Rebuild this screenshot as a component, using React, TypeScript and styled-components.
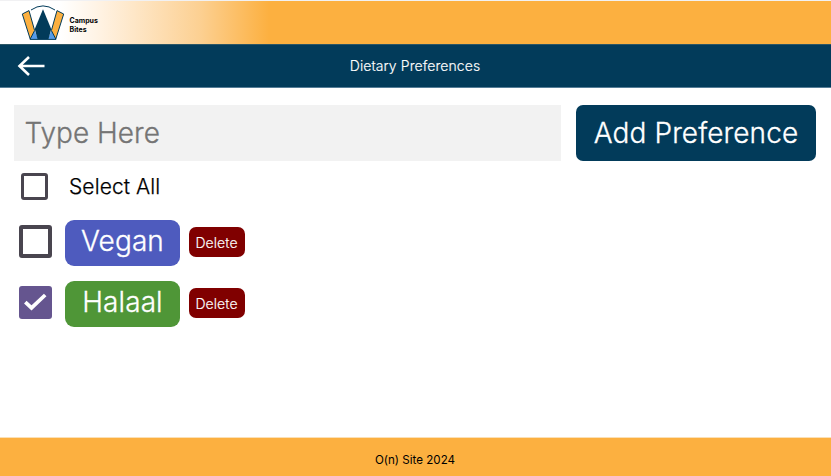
import React, { useState } from "react";
import styled, { createGlobalStyle, css } from "styled-components";

const GlobalStyle = createGlobalStyle`
  * { box-sizing: border-box; }
  body { margin: 0; background: #fff; font-family: Inter, "Liberation Sans", sans-serif; }
`;

const largeText = css`
  font-family: inherit;
  font-size: 28px;
  font-weight: 300;
  letter-spacing: 0.1px;
  -webkit-text-stroke: 0.3px currentColor;
`;

const smallText = css`
  font-family: inherit;
  font-size: 14px;
  font-weight: 300;
  letter-spacing: 0.08px;
  -webkit-text-stroke: 0.15px currentColor;
`;

const Page = styled.div`
  display: flex;
  flex-direction: column;
  width: 831px;
  height: 476px;
  overflow: hidden;
  background: #fff;
`;

const BrandBar = styled.header`
  display: flex;
  flex: none;
  height: 44px;
  padding-left: 21px;
  border-top: 1px solid #f1f1f3;
  background: linear-gradient(90deg, #fff 60px, #fff2e2 101px, #fcd092 200px, #fcb040 269px);
`;

const Logo = styled.svg`
  flex: none;
  width: 44px;
  height: 40px;
  margin-top: 3px;
`;

const BrandName = styled.div`
  margin: 15px 0 0 4.5px;
  font-size: 7px;
  font-weight: 700;
  line-height: 9px;
`;

const TitleBar = styled.div`
  display: grid;
  grid-template-columns: 60px 1fr 60px;
  align-items: center;
  flex: none;
  height: 44px;
  border-top: 1px solid #2d5766;
  border-bottom: 1px solid #557d97;
  background: #023b5a;
`;

const BackButton = styled.button`
  display: flex;
  width: 28px;
  height: 22px;
  margin-left: 17px;
  padding: 0;
  border: 0;
  background: none;
`;

const Title = styled.h1`
  ${smallText}
  margin: 0 1px 0 0;
  color: #fff;
  line-height: 20px;
  text-align: center;
`;

const Content = styled.main`
  flex: 1;
  padding: 17px 15px 0 14px;
`;

const AddRow = styled.form`
  display: flex;
  gap: 15px;
  height: 56px;
`;

const PreferenceInput = styled.input`
  ${largeText}
  width: 547px;
  height: 56px;
  padding: 0 0 0 10.5px;
  border: 0;
  border-radius: 0;
  outline: 0;
  background: #f2f2f2;
  letter-spacing: 0;
  &::placeholder { color: #757575; opacity: 1; }
`;

const AddButton = styled.button`
  ${largeText}
  width: 240px;
  height: 56px;
  padding: 0;
  border: 0;
  border-radius: 7px;
  background: #023b5a;
  color: #fff;
  white-space: nowrap;
`;

const SelectAllRow = styled.label`
  display: flex;
  align-items: center;
  height: 27px;
  margin: 12px 0 0 7px;
`;

const SelectAllText = styled.span`
  margin-left: 21px;
  font-size: 21px;
  font-weight: 300;
  letter-spacing: 0.1px;
  line-height: 27px;
  -webkit-text-stroke: 0.25px currentColor;
`;

const Check = styled.button<{ $size: number; $line: number; $checked?: boolean }>`
  display: flex;
  align-items: center;
  justify-content: center;
  flex: none;
  width: ${(p) => p.$size}px;
  height: ${(p) => p.$size}px;
  padding: 0;
  border: ${(p) => (p.$checked ? 0 : p.$line)}px solid #49454f;
  border-radius: 3px;
  background: ${(p) => (p.$checked ? "#65558f" : "#fff")};
`;

const PreferenceList = styled.div`
  display: flex;
  flex-direction: column;
  gap: 15px;
  margin: 19.5px 0 0 4.5px;
`;

const PreferenceRow = styled.div`
  display: flex;
  align-items: center;
  height: 46px;
  & > :first-child { margin-bottom: 2px; }
`;

const Tag = styled.div<{ $color: string }>`
  ${largeText}
  width: 115px;
  height: 46px;
  margin-left: 13.5px;
  border-radius: 9px;
  background: ${(p) => p.$color};
  color: #fff;
  line-height: 43px;
  text-align: center;
`;

const DeleteButton = styled.button`
  ${smallText}
  width: 56px;
  height: 30px;
  margin: 0 0 0.5px 9px;
  padding: 1px 1px 0 0;
  border: 0;
  border-radius: 7px;
  background: #800000;
  color: #fff;
`;

const Footer = styled.footer`
  flex: none;
  height: 39px;
  padding: 13px 1px 0 0;
  border-top: 1px solid #fbe0b6;
  background: #fcb040;
  font-size: 11.6px;
  font-weight: 400;
  line-height: 18px;
  text-align: center;
`;

const TICK = (
  <svg width="33" height="33" viewBox="0 0 33 33" fill="none">
    <path d="M6.3 16.2 12.5 21.9 26.2 9" stroke="#fff" strokeWidth="3.7" />
  </svg>
);

const initial = [
  { name: "Vegan", color: "#4e5bbe", checked: false },
  { name: "Halaal", color: "#4f9637", checked: true },
];

export default function App() {
  const [items, setItems] = useState(initial);
  const toggle = (name: string) =>
    setItems(items.map((i) => (i.name === name ? { ...i, checked: !i.checked } : i)));

  return (
    <>
      <GlobalStyle />
      <Page>
        <BrandBar>
          <Logo viewBox="0 0 44 40">
            <path d="M8 6.6Q22-4 36 6.6L34 35H9Z" fill="#fff" />
            <path d="M10 6Q22-2.2 34 6" fill="none" stroke="#023b5a" strokeWidth="1" />
            <path d="M13.5 26 17 35.3H9ZM30.5 26 27 35.3h8Z" fill="#559be8" />
            <path d="M1.3 10 8 6.6 13.6 26.5 9.2 35ZM42.7 10 36 6.6 30.4 26.5 34.8 35Z" fill="#fcb040" stroke="#023b5a" strokeWidth="1" />
            <path d="M22 5.3 30.2 25 27.5 35.3H16.5L13.8 25Z" fill="#023b5a" />
            <path d="M8.8 35.4H35.2" stroke="#023b5a" />
          </Logo>
          <BrandName>Campus<br />Bites</BrandName>
        </BrandBar>
        <TitleBar>
          <BackButton aria-label="Back">
            <svg width="28" height="22" viewBox="0 0 28 22" fill="none" stroke="#fff" strokeWidth="2.6">
              <path d="M27.5 11H2.5M12 2 2.5 11 12 20" />
            </svg>
          </BackButton>
          <Title>Dietary Preferences</Title>
        </TitleBar>
        <Content>
          <AddRow onSubmit={(e) => e.preventDefault()}>
            <PreferenceInput placeholder="Type Here" />
            <AddButton>Add Preference</AddButton>
          </AddRow>
          <SelectAllRow>
            <Check $size={27} $line={3} aria-label="Select all" />
            <SelectAllText>Select All</SelectAllText>
          </SelectAllRow>
          <PreferenceList>
            {items.map((i) => (
              <PreferenceRow key={i.name}>
                <Check $size={33} $line={4} $checked={i.checked} aria-label={i.name} onClick={() => toggle(i.name)}>
                  {i.checked && TICK}
                </Check>
                <Tag $color={i.color}>{i.name}</Tag>
                <DeleteButton onClick={() => setItems(items.filter((o) => o !== i))}>Delete</DeleteButton>
              </PreferenceRow>
            ))}
          </PreferenceList>
        </Content>
        <Footer>O(n) Site 2024</Footer>
      </Page>
    </>
  );
}
